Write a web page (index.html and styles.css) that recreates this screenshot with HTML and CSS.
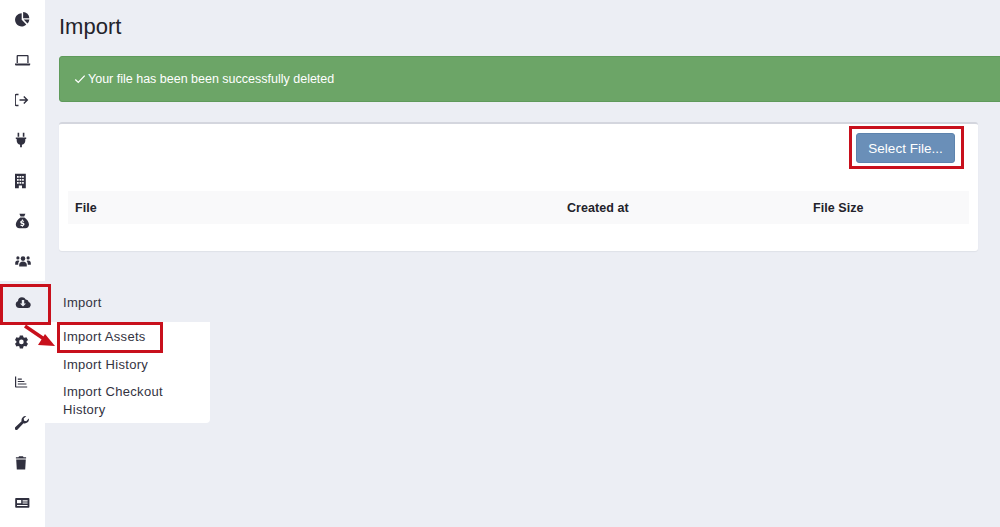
FILE: index.html
```html
<!DOCTYPE html>
<html lang="en">
<head>
    <meta charset="UTF-8">
    <title>Import</title>
    <link rel="stylesheet" href="styles.css">
</head>
<body>
    <div id="page">
        <div id="sidebar">
            <a class="nav-item"><svg viewBox="0.5 0 16 16"><path d="M7.2 2.2v6.6l4.6 4.7A6.6 6.6 0 1 1 7.2 2.2z"/><path d="M8.6 1v6.2h6.2A6.3 6.3 0 0 0 8.6 1z"/><path d="M9.2 8.6h5.7a6.4 6.4 0 0 1-1.9 3.9z"/></svg></a>
            <a class="nav-item"><svg viewBox="0.4 0 16 16"><path d="M3 3h10a1 1 0 0 1 1 1v7h-1.3V4.3H3.3V11H2V4a1 1 0 0 1 1-1z"/><path d="M.4 11.6h15.2v.9a1 1 0 0 1-1 1H1.4a1 1 0 0 1-1-1z"/></svg></a>
            <a class="nav-item"><svg viewBox="2 0 16 16" class="line"><path d="M5.5 2.5H3.2a1 1 0 0 0-1 1v9a1 1 0 0 0 1 1h2.3M6.5 8h7.8M10.8 4.6 14.3 8l-3.5 3.4"/></svg></a>
            <a class="nav-item"><svg viewBox="2 0 16 16"><path d="M4.6.8h1.6v4H4.6zM9.8.8h1.6v4H9.8zM2.8 5.4h10.4v1.5h-.9v1.7a4.3 4.3 0 0 1-3.4 4.2v2.4H7.1v-2.4a4.3 4.3 0 0 1-3.4-4.2V6.9h-.9z"/></svg></a>
            <a class="nav-item"><svg viewBox="2.6 0 16 16"><path fill-rule="evenodd" d="M2.6.8h10.8v14.4H9.6v-2.8H6.4v2.8H2.6zM4.6 3v1.7h1.7V3zm2.5 0v1.7h1.8V3zm2.6 0v1.7h1.7V3zM4.6 6v1.7h1.7V6zm2.5 0v1.7h1.8V6zm2.6 0v1.7h1.7V6zM4.6 9v1.7h1.7V9zm2.5 0v1.7h1.8V9zm2.6 0v1.7h1.7V9z"/></svg></a>
            <a class="nav-item"><svg viewBox="0.6 0 16 16"><path fill-rule="evenodd" d="M5 .8h6L9.8 3.6H6.2zM6 4.4h4c2.6 1.6 4.6 4.6 4.6 7.2 0 2.4-1.6 3.6-3.6 3.6H5c-2 0-3.6-1.2-3.6-3.6C1.4 9 3.4 6 6 4.4zM7.5 6.6v.9c-1 .2-1.6.8-1.6 1.7 0 1 .8 1.4 1.8 1.7.7.2 1 .3 1 .6s-.3.5-.8.5-1-.2-1.4-.5l-.6.9c.4.3 1 .5 1.6.6v.8h1v-.9c1-.2 1.6-.8 1.6-1.7 0-1-.7-1.4-1.8-1.7-.7-.2-1-.3-1-.6s.3-.4.7-.4.8.1 1.2.4l.6-.9c-.4-.3-.9-.5-1.3-.5v-.9z"/></svg></a>
            <a class="nav-item"><svg viewBox="0 0 16 16"><circle cx="8" cy="5.6" r="2.3"/><circle cx="2.9" cy="4.9" r="1.6"/><circle cx="13.1" cy="4.9" r="1.6"/><path d="M4.2 13.4v-1.6c0-2 1.6-3.3 3.8-3.3s3.8 1.3 3.8 3.3v1.6z"/><path d="M3.2 11.8H.2V9.9c0-1.3 1-2.3 2.3-2.3h1.2l.7.5c-.9.8-1.2 2.2-1.2 3.7zM12.8 11.8h3V9.9c0-1.3-1-2.3-2.3-2.3h-1.2l-.7.5c.9.8 1.2 2.2 1.2 3.7z"/></svg></a>
            <a class="nav-item active">
                <svg viewBox="0 0 16 16"><path fill-rule="evenodd" d="M4.2 14A3.7 3.7 0 0 1 3 6.9 4 4 0 0 1 7 3.2c1.6 0 3 .9 3.6 2.3A3 3 0 0 1 13.7 8 3.1 3.1 0 0 1 12.6 14zM6.8 6v3.4H5l3 3 3-3H9.2V6z"/></svg>
                <div class="flyout">
                    <div class="flyout-title">Import</div>
                    <ul class="flyout-menu">
                        <li>Import Assets</li>
                        <li>Import History</li>
                        <li>Import Checkout History</li>
                    </ul>
                </div>
            </a>
            <a class="nav-item"><svg viewBox="1.6 0 16 16"><path fill-rule="evenodd" d="M6.4 1.4h3.2l.4 1.8 1.2.6 1.8-.6 1.6 2.8-1.4 1.2v1.4l1.4 1.2-1.6 2.8-1.8-.6-1.2.6-.4 1.8H6.4L6 12.6l-1.2-.6-1.8.6-1.4-2.8 1.4-1.2V7.2L1.6 6 3 3.2l1.8.6L6 3.2zM8 5.6a2.3 2.3 0 1 0 0 4.6 2.3 2.3 0 0 0 0-4.6z"/></svg></a>
            <a class="nav-item"><svg viewBox="1.4 0 16 16"><path d="M1.4 2.4h1.2v10h11v1.2H2.2a.8.8 0 0 1-.8-.8z"/><path d="M4.2 4.6h4v1.1h-4zM4.2 7h6.6v1.1H4.2zM4.2 9.4h8.6v1.1H4.2z"/></svg></a>
            <a class="nav-item"><svg viewBox="1 0 16 16"><path d="M15 4.2a4.2 4.2 0 0 1-5.5 4L3.6 14.6a1.7 1.7 0 0 1-2.4-2.4l6.4-5.9a4.2 4.2 0 0 1 4.7-5.2L9.7 3.6l.4 2.1 2.1.5 2.6-2.6c.1.2.2.4.2.6z"/></svg></a>
            <a class="nav-item"><svg viewBox="2 0 16 16"><path d="M6 1.2h4l.5 1h2.6v1.4H2.9V2.2h2.6zM3.2 4.6h9.6l-.6 10H3.8z"/></svg></a>
            <a class="nav-item"><svg viewBox="0 0 16 16"><path fill-rule="evenodd" d="M1 3h12.6a.8.8 0 0 1 .8.8v8.2a.8.8 0 0 1-.8.8H1a.8.8 0 0 1-.8-.8V3.8A.8.8 0 0 1 1 3zm1 1.9v3.3h4.2V4.9zm5.6.4v1.1h5V5.3zm0 2.1v1.1h5V7.4zm-5.6 2.7v.9h10.6v-.9z"/></svg></a>
        </div>
        <div id="content">
            <h1 class="page-title">Import</h1>
            <div class="alert">
                <svg class="alert-check" viewBox="0 0 14 14"><path d="M1.5 7.6 5 11l7.5-8"/></svg>
                Your file has been been successfully deleted
            </div>
            <div class="box">
                <div class="box-tools">
                    <a class="btn-select">Select File...</a>
                </div>
                <div class="table-head">
                    <div class="col-file">File</div>
                    <div class="col-created">Created at</div>
                    <div class="col-size">File Size</div>
                </div>
            </div>
        </div>
    </div>

    <!-- red annotations drawn over the screenshot -->
    <div class="mark mark-nav"></div>
    <div class="mark mark-assets"></div>
    <div class="mark mark-select"></div>
    <svg class="mark-arrow" viewBox="0 0 40 30"><path d="M2 1 24 16" class="arrow-line"/><path d="M32 21 15 20 22 9z" class="arrow-head"/></svg>
</body>
</html>
```

FILE: styles.css
```css
* {
    margin: 0; padding: 0; box-sizing: border-box;
}
html, body {
    height: 527px; overflow: hidden;
}
body {
    font-family: "Liberation Sans", sans-serif; font-size: 13px; color: #33333f; background: #eceef4; position: relative;
}
#page {
    display: flex; height: 527px;
}
#sidebar {
    width: 45px; flex: none; background: #fff; display: flex; flex-direction: column;
}
.nav-item {
    height: 40.35px; flex: none; display: flex; align-items: center; padding-left: 15px; position: relative; top: -1px;
}
.nav-item svg {
    width: 16px; height: 16px; fill: #30303f; display: block;
}
.nav-item svg.line {
    fill: none; stroke: #30303f; stroke-width: 1.4;
}
.nav-item.active {
    background: #eceef4;
}
.flyout {
    position: absolute; left: 45px; top: 1px; width: 165px; z-index: 2;
}
.flyout-title {
    height: 40px; line-height: 41px; padding-left: 18px; letter-spacing: .3px;
}
.flyout-menu {
    list-style: none; background: #fff; padding: 6px 18px 4px; border-radius: 0 0 4px 0; line-height: 18px; letter-spacing: .3px;
}
.flyout-menu li {
    padding: 0 0 9.5px;
}
.flyout-menu li:last-child {
    padding-bottom: 0;
}
#content {
    flex: 1; min-width: 0; padding: 13px 0 0 14px;
}
.page-title {
    font-size: 22px; font-weight: 400; line-height: 27px; color: #23232b;
}
.alert {
    width: 980px; height: 46px; margin-top: 16px; background: #6ca567; border: 1px solid #5f9a5b; border-radius: 3px; color: #fff; display: flex; align-items: center; gap: 2px; padding-left: 14px; line-height: 16px; font-size: 12.5px;
}
.alert-check {
    width: 12px; height: 12px; fill: none; stroke: #fff; stroke-width: 1.5;
}
.box {
    width: 919px; height: 129px; margin-top: 20px; background: #fff; border-top: 2px solid #d4d6de; border-radius: 3px; box-shadow: 0 1px 1px #dfe1e8; padding: 9px 9px 0;
}
.box-tools {
    display: flex; justify-content: flex-end; padding-right: 14px;
}
.btn-select {
    width: 99px; height: 30px; background: #6a8fb8; border: 1px solid #5d83ad; border-radius: 3px; color: #fff; display: flex; align-items: center; justify-content: center; font-size: 13.5px;
}
.table-head {
    display: flex; height: 33px; margin-top: 28px; background: #f9f9fa; align-items: center; font-weight: 700; font-size: 12.5px; color: #23232b; padding-left: 7px; letter-spacing: .05px;
}
.col-file {
    width: 492px;
}
.col-created {
    width: 246px;
}
.mark {
    position: absolute; border: 3px solid #c8101c; z-index: 3;
}
.mark-nav {
    left: 0; top: 284px; width: 51px; height: 41px;
}
.mark-assets {
    left: 57px; top: 322px; width: 106px; height: 31px;
}
.mark-select {
    left: 849px; top: 126px; width: 115px; height: 43px;
}
.mark-arrow {
    position: absolute; left: 23px; top: 325px; width: 40px; height: 30px; z-index: 3;
}
.arrow-line {
    stroke: #c8101c; stroke-width: 3.5; fill: none;
}
.arrow-head {
    fill: #c8101c;
}
```
